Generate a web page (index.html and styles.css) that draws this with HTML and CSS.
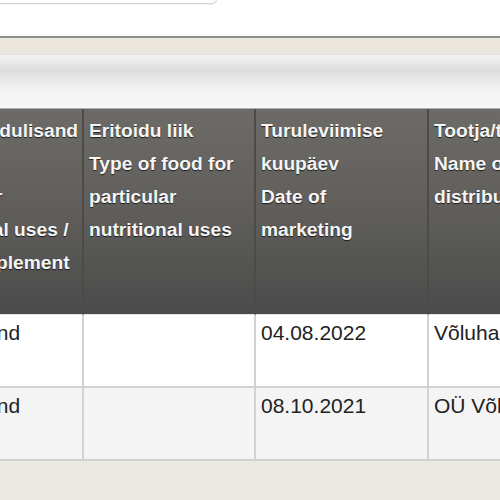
FILE: index.html
```html
<!DOCTYPE html>
<html lang="et">
<head>
<meta charset="utf-8">
<title>Eritoidud</title>
<link rel="stylesheet" href="styles.css">
</head>
<body>
<div class="topbar"><div class="search"></div></div>
<div class="strip"></div>
<div class="bar"></div>
<table class="grid">
  <thead>
    <tr>
      <th class="c1">Eritoit/toidulisand<br>Food for<br>particular<br>nutritional uses /<br>food supplement</th>
      <th class="c2">Eritoidu liik<br>Type of food for particular nutritional uses</th>
      <th class="c3">Turuleviimise kuupäev<br>Date of marketing</th>
      <th class="c4">Tootja/turustaja<br>Name of manufacturer/<br>distributor</th>
    </tr>
  </thead>
  <tbody>
    <tr>
      <td>Toidulisand</td>
      <td></td>
      <td>04.08.2022</td>
      <td>Võluhaldjas OÜ</td>
    </tr>
    <tr class="alt">
      <td>Toidulisand</td>
      <td></td>
      <td>08.10.2021</td>
      <td>OÜ Võlumets</td>
    </tr>
  </tbody>
</table>
<div class="footer"></div>
</body>
</html>
```

FILE: styles.css
```css
html, body {
  margin: 0;
  padding: 0;
}
body {
  width: 500px;
  height: 500px;
  overflow: hidden;
  background: #ece9e2;
  font-family: "Liberation Sans", Arial, sans-serif;
}
.topbar {
  height: 36px;
  background: #ffffff;
  overflow: hidden;
}
.search {
  width: 225px;
  height: 30px;
  margin-top: -28px;
  margin-left: -10px;
  border: 1px solid #d4d4d4;
  border-radius: 5px;
  box-shadow: 0 1px 1px rgba(0,0,0,0.06);
  background: #ffffff;
}
.strip {
  height: 16px;
  border-top: 2px solid #8f8f8f;
  background: #ebe7df;
}
.bar {
  height: 53px;
  border-top: 1px solid #e2e0dc;
  border-bottom: 1px solid #b0b0b0;
  background: linear-gradient(to bottom, #f3f3f3 0%, #dcdcdc 30%, #eeeeee 55%, #f5f5f5 75%, #f7f7f7 100%);
}
.grid {
  margin-left: -90px;
  width: 819px;
  table-layout: fixed;
  border-collapse: separate;
  border-spacing: 0;
}
.grid th, .grid td {
  box-sizing: border-box;
  text-align: left;
  vertical-align: top;
  padding: 5px 8px 0 5px;
}
.grid th {
  height: 206px;
  font-size: 19.2px;
  font-weight: bold;
  line-height: 33px;
  color: #f5f5f5;
  text-shadow: 0 1px 1px rgba(0,0,0,0.7);
  background: linear-gradient(to bottom, #6d6b67 0%, #5f5e5b 50%, #4b4b4b 100%);
  border-right: 2px solid #4c4b48;
  border-bottom: 1px solid #e6e6e6;
}
.grid th.c1 { width: 174px; }
.grid th.c2 { width: 172px; }
.grid th.c3 { width: 173px; }
.grid th.c4 { width: 300px; }
.grid td {
  height: 73px;
  font-size: 21px;
  line-height: 26px;
  color: #222222;
  background: #ffffff;
  border-right: 2px solid #d2d2d2;
  border-bottom: 2px solid #d2d2d2;
}
.grid tr.alt td {
  background: #f4f4f4;
}
.footer {
  height: 60px;
  background: #ece9e2;
}
```
